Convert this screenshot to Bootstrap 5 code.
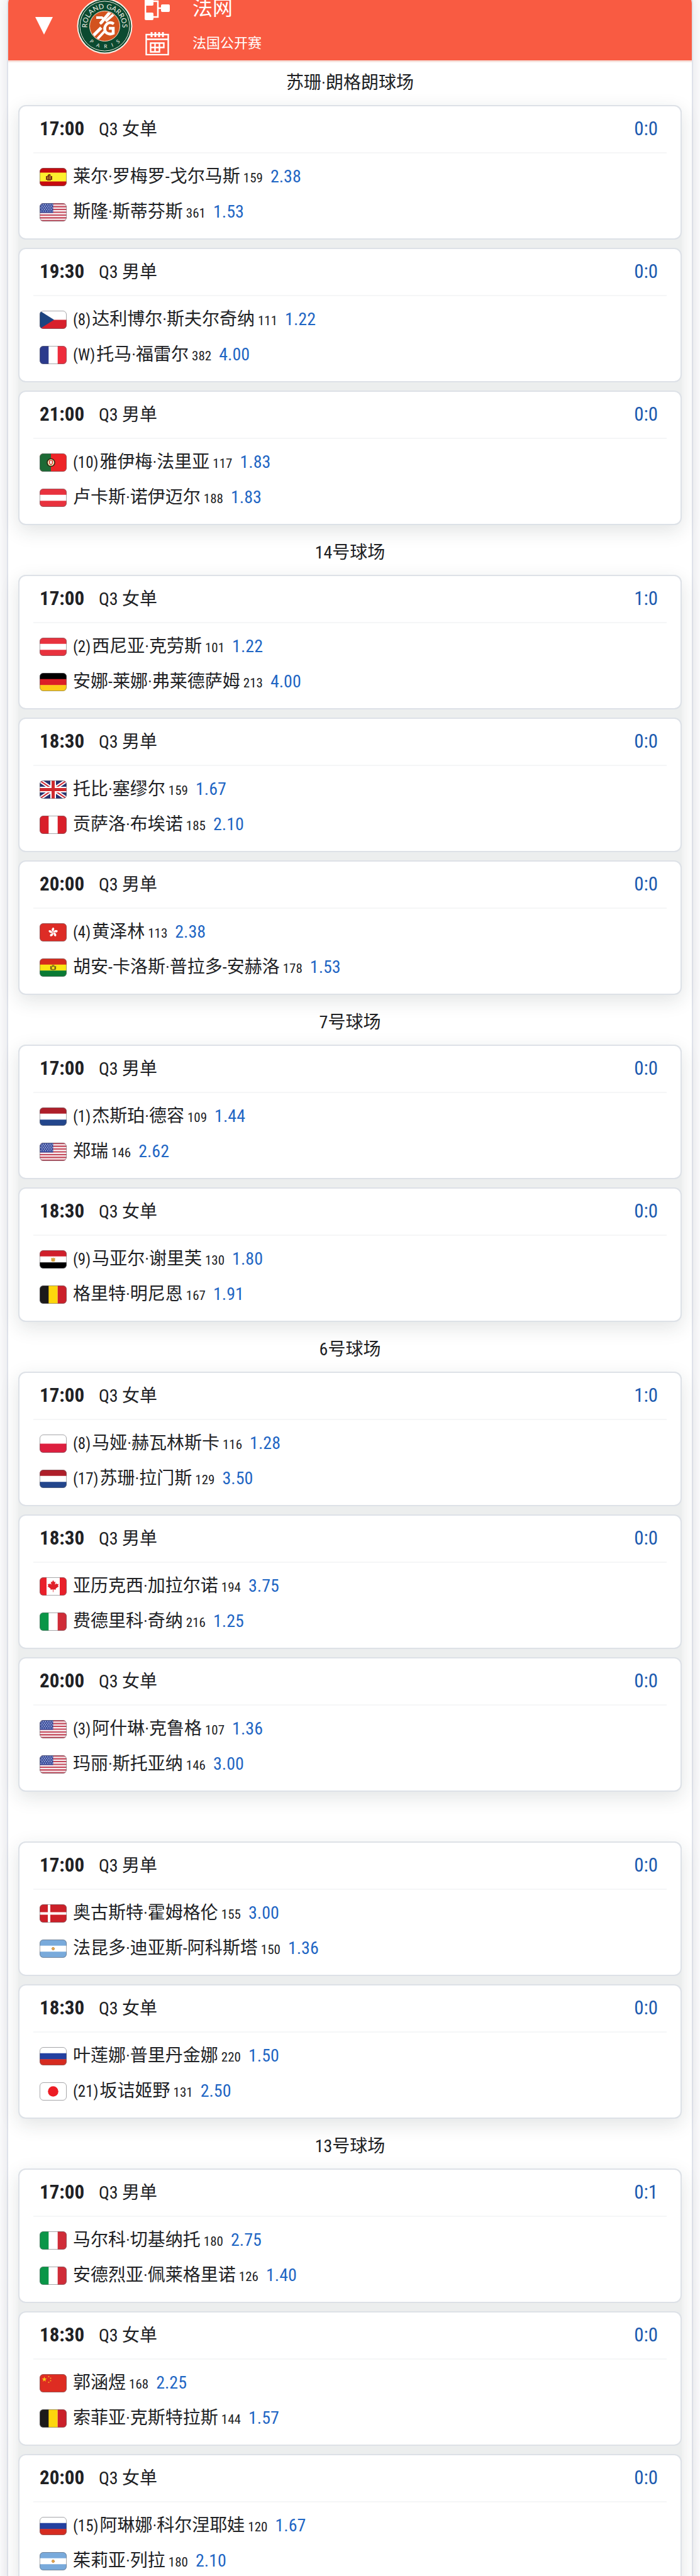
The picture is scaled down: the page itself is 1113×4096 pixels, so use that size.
<!DOCTYPE html>
<html lang="zh-CN">
<head>
<meta charset="utf-8">
<meta name="viewport" content="width=device-width, initial-scale=1">
<title>法网 赛程</title>
<link href="https://cdn.jsdelivr.net/npm/bootstrap@5.3.0/dist/css/bootstrap.min.css" rel="stylesheet">
<style>
  body { font-family: "Roboto Condensed", "Liberation Sans Narrow", Roboto, "Noto Sans CJK SC", sans-serif; font-size: 28px; color: #202124; background: #fdfdfe; }
  .page-view { height: 100vh; overflow: hidden; padding: 0 11px; }
  .event-panel { margin-top: -16px; background: #fff; border: 2px solid #dfe2ea; border-radius: 22px; box-shadow: 0 0 24px rgba(40, 50, 70, .12); }
  .event-head { height: 110px; background: #f95b42; border-radius: 20px 20px 0 0; color: #fff; padding-left: 42px; }
  .head-rule { height: 3px; background: #f6e3de; }
  .fold-btn { width: 30px; height: 30px; }
  .event-logo { width: 89px; height: 89px; margin-left: 37px; }
  .event-tools { width: 40px; margin-left: 19px; }
  .event-names { margin-left: 36px; }
  .head-cell { height: 55px; display: flex; align-items: center; }
  .event-title { font-size: 32px; font-weight: 400; }
  .event-sub { font-size: 22px; font-weight: 400; }
  .court-list { padding: 2px 16px 16px; }
  .court-name { height: 66px; line-height: 61px; font-size: 28px; font-weight: 400; text-align: center; }
  .match-stack { gap: 13px; background: #eceeee; border-radius: 12px; box-shadow: 0 9px 30px rgba(30, 50, 50, .13); }
  .match-stack + .court-name { margin-top: 13px; }
  .match-box { background: #fff; border: 2px solid #dde1e7; border-radius: 12px; padding-bottom: 14px; }
  .match-top { height: 75px; margin: 0 22px; padding: 0 14px 0 10px; border-bottom: 2px solid #f5f6f7; }
  .match-time { font-size: 31px; font-weight: 700; width: 94px; }
  .match-score { font-size: 31px; color: #1d5bb0; }
  .player-rows { padding: 9px 32px 0; }
  .player-row { height: 56px; }
  .flag { width: 43px; height: 29px; margin-right: 10px; flex: none; }
  .seed { font-size: 25px; margin-right: 2px; }
  .rank { font-size: 21px; margin-left: 5px; }
  .odds { color: #1f66c4; margin-left: 12px; }
</style>
<script src="https://cdn.jsdelivr.net/npm/bootstrap@5.3.0/dist/js/bootstrap.bundle.min.js"></script>
</head>
<body>
<svg width="0" height="0" class="position-absolute" aria-hidden="true">
  <defs>
    <clipPath id="round"><rect width="43" height="29" rx="6"/></clipPath>
    <symbol id="es" viewBox="0 0 43 29"><g clip-path="url(#round)"><path fill="#c60b0f" d="M0 0h43v29H0z"/><path fill="#fdf02e" d="M0 7.500h43v14H0z"/><path fill="#7a3a12" d="M10 13h2l2-3 3 0 1 3h2v6h-2v1h-6v-1h-2z"/><path stroke="#e8b93a" d="M13 14v4M16.500 12v6"/></g></symbol>
    <symbol id="us" viewBox="0 0 43 29"><g clip-path="url(#round)"><path fill="#f7eef0" d="M0 0h43v29H0z"/><path stroke="#c4485a" stroke-width="2.200" d="M0 1.100h43M0 5.600h43M0 10h43M0 14.500h43M0 19h43M0 23.400h43M0 27.900h43"/><path fill="#3c4f9e" d="M0 0h21.500v15.600H0z"/><path stroke="#cfd6f0" stroke-width="1.300" stroke-dasharray="1.300 2.300" d="M1.500 2.500h19M3.300 5h17M1.500 7.500h19M3.300 10h17M1.500 12.700h19"/></g></symbol>
    <symbol id="cz" viewBox="0 0 43 29"><g clip-path="url(#round)"><path fill="#fff" d="M0 0h43v15H0z"/><path fill="#d8202c" d="M0 14.500h43V29H0z"/><path fill="#1c4380" d="M0 0l23 14.500L0 29z"/></g></symbol>
    <symbol id="fr" viewBox="0 0 43 29"><g clip-path="url(#round)"><path fill="#fff" d="M0 0h43v29H0z"/><path fill="#2b3a8c" d="M0 0h14.300v29H0z"/><path fill="#ee2c3c" d="M28.700 0H43v29H28.700z"/></g></symbol>
    <symbol id="pt" viewBox="0 0 43 29"><g clip-path="url(#round)"><path fill="#ee2427" d="M0 0h43v29H0z"/><path fill="#1d6a35" d="M0 0h18v29H0z"/><circle cx="18" cy="14.500" r="6.800" fill="#33220c"/><circle cx="18" cy="14.500" r="5.200" fill="#f0e2b0"/><path fill="#d8342c" d="M15 11h6v5l-3 3-3-3z"/><path fill="#fff" d="M16.500 12h3v4l-1.500 1-1.500-1z"/></g></symbol>
    <symbol id="at" viewBox="0 0 43 29"><g clip-path="url(#round)"><path fill="#e8323e" d="M0 0h43v29H0z"/><path fill="#fff" d="M0 9.700h43v9.600H0z"/></g></symbol>
    <symbol id="de" viewBox="0 0 43 29"><g clip-path="url(#round)"><path d="M0 0h43v10H0z"/><path fill="#dc1f26" d="M0 9.700h43v10H0z"/><path fill="#fdca16" d="M0 19.300h43V29H0z"/></g></symbol>
    <symbol id="gb" viewBox="0 0 43 29"><g clip-path="url(#round)"><path fill="#28326e" d="M0 0h43v29H0z"/><path stroke="#fff" stroke-width="6" d="M0 0l43 29M43 0L0 29"/><path stroke="#cf2a36" stroke-width="2" d="M0 0l43 29M43 0L0 29"/><path stroke="#fff" stroke-width="9" d="M21.500 0v29M0 14.500h43"/><path stroke="#cf2a2e" stroke-width="5" d="M21.500 0v29M0 14.500h43"/></g></symbol>
    <symbol id="pe" viewBox="0 0 43 29"><g clip-path="url(#round)"><path fill="#d91f2a" d="M0 0h43v29H0z"/><path fill="#fff" d="M14.300 0h14.400v29H14.300z"/></g></symbol>
    <symbol id="hk" viewBox="0 0 43 29"><g clip-path="url(#round)"><path fill="#dd2c26" d="M0 0h43v29H0z"/><g fill="#fff"><path id="petal" d="M21.500 14.200c-3-2-3.200-5.500 0-7.400 2.600 1.400 1.800 3 1.200 4.200-.6 1.200-.8 2-1.200 3.200z"/><use href="#petal" transform="rotate(72 21.500 14.500)"/><use href="#petal" transform="rotate(144 21.500 14.500)"/><use href="#petal" transform="rotate(216 21.500 14.500)"/><use href="#petal" transform="rotate(288 21.500 14.500)"/></g></g></symbol>
    <symbol id="bo" viewBox="0 0 43 29"><g clip-path="url(#round)"><path fill="#d62b1c" d="M0 0h43v10H0z"/><path fill="#fae413" d="M0 9.700h43v10H0z"/><path fill="#0a7a34" d="M0 19.300h43V29H0z"/><g fill="none" stroke="#6b5a1c" stroke-width="1.200"><circle cx="21.500" cy="15" r="2.800"/><path d="M17.500 12v5l2 1M25.500 12v5l-2 1M19.500 11l4 0"/></g></g></symbol>
    <symbol id="nl" viewBox="0 0 43 29"><g clip-path="url(#round)"><path fill="#ae1f2a" d="M0 0h43v10H0z"/><path fill="#fff" d="M0 9.700h43v10H0z"/><path fill="#23468c" d="M0 19.300h43V29H0z"/></g></symbol>
    <symbol id="eg" viewBox="0 0 43 29"><g clip-path="url(#round)"><path fill="#d01f2b" d="M0 0h43v10H0z"/><path fill="#fff" d="M0 9.700h43v10H0z"/><path d="M0 19.300h43V29H0z"/><path fill="#d9a441" d="M18.500 11.500l2 1.500 1-2 1 2 2-1.500v5l-1 1.500h-4l-1-1.500z"/></g></symbol>
    <symbol id="be" viewBox="0 0 43 29"><g clip-path="url(#round)"><path fill="#1c1a1a" d="M0 0h15v29H0z"/><path fill="#fdd60d" d="M14.300 0h14.400v29H14.300z"/><path fill="#cb202a" d="M28.700 0H43v29H28.700z"/></g></symbol>
    <symbol id="pl" viewBox="0 0 43 29"><g clip-path="url(#round)"><path fill="#fff" d="M0 0h43v15H0z"/><path fill="#dd1f3f" d="M0 14.500h43V29H0z"/></g></symbol>
    <symbol id="ca" viewBox="0 0 43 29"><g clip-path="url(#round)"><path fill="#e9202a" d="M0 0h43v29H0z"/><path fill="#fff" d="M11 0h21v29H11z"/><path fill="#e02029" d="M21.500 4.500l1.800 3.300 1.900-1-.8 5 2.500-2.400.6 1.500 2.700-.5-1 3 1.200.8-5 4 .5 1.600-4-.6v4.300h-.8v-4.300l-4 .6.500-1.600-5-4 1.200-.8-1-3 2.700.5.600-1.500 2.500 2.400-.8-5 1.900 1z"/></g></symbol>
    <symbol id="it" viewBox="0 0 43 29"><g clip-path="url(#round)"><path fill="#fff" d="M0 0h43v29H0z"/><path fill="#0a9648" d="M0 0h14.300v29H0z"/><path fill="#d02c38" d="M28.700 0H43v29H28.700z"/></g></symbol>
    <symbol id="dk" viewBox="0 0 43 29"><g clip-path="url(#round)"><path fill="#cc2029" d="M0 0h43v29H0z"/><path stroke="#fff" stroke-width="4" d="M15 0v29M0 14.500h43"/></g></symbol>
    <symbol id="ar" viewBox="0 0 43 29"><g clip-path="url(#round)"><path fill="#79aadb" d="M0 0h43v29H0z"/><path fill="#fff" d="M0 9.700h43v9.600H0z"/><circle cx="21.500" cy="14.500" r="2.200" fill="#e3a548" stroke="#a5682a" stroke-dasharray="1 1"/></g></symbol>
    <symbol id="ru" viewBox="0 0 43 29"><g clip-path="url(#round)"><path fill="#fff" d="M0 0h43v10H0z"/><path fill="#2340a0" d="M0 9.700h43v10H0z"/><path fill="#d62b20" d="M0 19.300h43V29H0z"/></g></symbol>
    <symbol id="jp" viewBox="0 0 43 29"><rect width="43" height="29" rx="6" fill="#fff"/><circle cx="21.500" cy="14.500" r="8.300" fill="#ec1c24"/></symbol>
    <symbol id="cn" viewBox="0 0 43 29"><g clip-path="url(#round)"><path fill="#de2c22" d="M0 0h43v29H0z"/><path fill="#fbd116" d="M7.500 4l1 3h3l-2.500 2 1 3-2.500-1.900L5 12l1-3-2.500-2h3z"/><g fill="#f0b020"><circle cx="14.500" cy="4" r="1"/><circle cx="17.500" cy="6.500" r="1"/><circle cx="17.500" cy="10.500" r="1"/><circle cx="14.500" cy="13" r="1"/></g></g></symbol>
    <symbol id="edge" viewBox="0 0 43 29"><rect x=".5" y=".5" width="42" height="28" rx="5.500" fill="none" stroke="#6d6d72" stroke-opacity=".6"/></symbol>
  </defs>
</svg>
<div class="page-view">
<main class="event-panel">
  <header class="event-head d-flex align-items-center">
    <button type="button" class="fold-btn btn p-0 border-0 d-flex" aria-label="收起">
      <svg width="30" height="30" viewBox="0 0 30 30"><path fill="#fff" d="M1 1h28L15 29z"/></svg>
    </button>
    <svg class="event-logo" viewBox="0 0 89 89" role="img" aria-label="Roland Garros Paris">
      <defs>
        <path id="arcTop" d="M17.300 51.500A28 28 0 1 1 71.700 51.500"/>
        <path id="arcBottom" d="M13.100 60A35 35 0 0 0 75.900 60"/>
        <clipPath id="clay"><circle cx="44.500" cy="44.500" r="23"/></clipPath>
      </defs>
      <circle cx="44.500" cy="44.500" r="44" fill="#fdeee4"/>
      <circle cx="44.500" cy="44.500" r="42" fill="#0b4a30"/>
      <circle cx="44.500" cy="44.500" r="39.500" fill="none" stroke="#f4ece0"/>
      <circle cx="44.500" cy="44.500" r="24" fill="#d2521e" stroke="#f6e4d0"/>
      <g clip-path="url(#clay)" fill="none" stroke="#fff">
        <path stroke-width="5" d="M55 20L38 40M22 64l17-17"/>
        <path stroke-width="4" d="M63 22L46 37M30 68l14-15"/>
        <path stroke-width="4" d="M31 31h9q4 2 1 6l-4 4"/>
        <path stroke-width="4.500" d="M59 41q-6-4-11 0-6 6-2 13 5 5 12 2v-8h-7"/>
      </g>
      <g fill="#f4f0e6" font-family="Lato, sans-serif">
        <text font-size="11"><textPath href="#arcTop" startOffset="50%" text-anchor="middle">ROLAND GARROS</textPath></text>
        <text font-size="8"><textPath href="#arcBottom" startOffset="50%" text-anchor="middle">P&nbsp;&nbsp;&nbsp;&nbsp;A&nbsp;&nbsp;&nbsp;&nbsp;R&nbsp;&nbsp;&nbsp;&nbsp;I&nbsp;&nbsp;&nbsp;&nbsp;S</textPath></text>
      </g>
    </svg>
    <div class="event-tools">
      <div class="head-cell">
        <button type="button" class="btn p-0 border-0 d-flex" aria-label="签表">
          <svg width="40" height="40" viewBox="0 0 40 40" fill="#fff"><rect y="3" width="14" height="12" rx="2"/><rect y="26" width="14" height="12" rx="2"/><rect x="26" y="13" width="14" height="12" rx="2"/><path fill="none" stroke="#fff" stroke-width="2.500" d="M14 8h7v25h-7M21 19h6M1.200 8v20"/></svg>
        </button>
      </div>
      <div class="head-cell">
        <button type="button" class="btn p-0 border-0 d-flex" aria-label="赛程">
          <svg width="40" height="38" viewBox="0 0 40 38" fill="none" stroke="#fff" stroke-width="2.400"><rect x="2.500" y="5" width="35" height="32"/><path d="M2.500 12.500h35"/><path stroke-width="3" d="M11 1v8M17 1v8M23 1v8M29 1v8"/><path d="M9.500 18.500h21v7h-7v7h-14zM16.500 18.500v14M23.500 18.500v7M9.500 25.500h14"/></svg>
        </button>
      </div>
    </div>
    <div class="event-names">
      <h1 class="head-cell event-title m-0">法网</h1>
      <div class="head-cell event-sub">法国公开赛</div>
    </div>
  </header>
  <div class="head-rule"></div>

  <div class="court-list">
    <h2 class="court-name mb-0">苏珊·朗格朗球场</h2>
    <section class="match-stack d-flex flex-column">
      <article class="match-box">
        <div class="match-top d-flex align-items-center"><time class="match-time">17:00</time><span>Q3 女单</span><span class="match-score ms-auto">0:0</span></div>
        <div class="player-rows">
          <div class="player-row d-flex align-items-center"><svg class="flag"><use href="#es"/><use href="#edge"/></svg><div class="d-flex align-items-baseline"><span>莱尔·罗梅罗-戈尔马斯</span><span class="rank">159</span><span class="odds">2.38</span></div></div>
          <div class="player-row d-flex align-items-center"><svg class="flag"><use href="#us"/><use href="#edge"/></svg><div class="d-flex align-items-baseline"><span>斯隆·斯蒂芬斯</span><span class="rank">361</span><span class="odds">1.53</span></div></div>
        </div>
      </article>
      <article class="match-box">
        <div class="match-top d-flex align-items-center"><time class="match-time">19:30</time><span>Q3 男单</span><span class="match-score ms-auto">0:0</span></div>
        <div class="player-rows">
          <div class="player-row d-flex align-items-center"><svg class="flag"><use href="#cz"/><use href="#edge"/></svg><div class="d-flex align-items-baseline"><span class="seed">(8)</span><span>达利博尔·斯夫尔奇纳</span><span class="rank">111</span><span class="odds">1.22</span></div></div>
          <div class="player-row d-flex align-items-center"><svg class="flag"><use href="#fr"/><use href="#edge"/></svg><div class="d-flex align-items-baseline"><span class="seed">(W)</span><span>托马·福雷尔</span><span class="rank">382</span><span class="odds">4.00</span></div></div>
        </div>
      </article>
      <article class="match-box">
        <div class="match-top d-flex align-items-center"><time class="match-time">21:00</time><span>Q3 男单</span><span class="match-score ms-auto">0:0</span></div>
        <div class="player-rows">
          <div class="player-row d-flex align-items-center"><svg class="flag"><use href="#pt"/><use href="#edge"/></svg><div class="d-flex align-items-baseline"><span class="seed">(10)</span><span>雅伊梅·法里亚</span><span class="rank">117</span><span class="odds">1.83</span></div></div>
          <div class="player-row d-flex align-items-center"><svg class="flag"><use href="#at"/><use href="#edge"/></svg><div class="d-flex align-items-baseline"><span>卢卡斯·诺伊迈尔</span><span class="rank">188</span><span class="odds">1.83</span></div></div>
        </div>
      </article>
    </section>

    <h2 class="court-name mb-0">14号球场</h2>
    <section class="match-stack d-flex flex-column">
      <article class="match-box">
        <div class="match-top d-flex align-items-center"><time class="match-time">17:00</time><span>Q3 女单</span><span class="match-score ms-auto">1:0</span></div>
        <div class="player-rows">
          <div class="player-row d-flex align-items-center"><svg class="flag"><use href="#at"/><use href="#edge"/></svg><div class="d-flex align-items-baseline"><span class="seed">(2)</span><span>西尼亚·克劳斯</span><span class="rank">101</span><span class="odds">1.22</span></div></div>
          <div class="player-row d-flex align-items-center"><svg class="flag"><use href="#de"/><use href="#edge"/></svg><div class="d-flex align-items-baseline"><span>安娜-莱娜·弗莱德萨姆</span><span class="rank">213</span><span class="odds">4.00</span></div></div>
        </div>
      </article>
      <article class="match-box">
        <div class="match-top d-flex align-items-center"><time class="match-time">18:30</time><span>Q3 男单</span><span class="match-score ms-auto">0:0</span></div>
        <div class="player-rows">
          <div class="player-row d-flex align-items-center"><svg class="flag"><use href="#gb"/><use href="#edge"/></svg><div class="d-flex align-items-baseline"><span>托比·塞缪尔</span><span class="rank">159</span><span class="odds">1.67</span></div></div>
          <div class="player-row d-flex align-items-center"><svg class="flag"><use href="#pe"/><use href="#edge"/></svg><div class="d-flex align-items-baseline"><span>贡萨洛·布埃诺</span><span class="rank">185</span><span class="odds">2.10</span></div></div>
        </div>
      </article>
      <article class="match-box">
        <div class="match-top d-flex align-items-center"><time class="match-time">20:00</time><span>Q3 男单</span><span class="match-score ms-auto">0:0</span></div>
        <div class="player-rows">
          <div class="player-row d-flex align-items-center"><svg class="flag"><use href="#hk"/><use href="#edge"/></svg><div class="d-flex align-items-baseline"><span class="seed">(4)</span><span>黄泽林</span><span class="rank">113</span><span class="odds">2.38</span></div></div>
          <div class="player-row d-flex align-items-center"><svg class="flag"><use href="#bo"/><use href="#edge"/></svg><div class="d-flex align-items-baseline"><span>胡安-卡洛斯·普拉多-安赫洛</span><span class="rank">178</span><span class="odds">1.53</span></div></div>
        </div>
      </article>
    </section>

    <h2 class="court-name mb-0">7号球场</h2>
    <section class="match-stack d-flex flex-column">
      <article class="match-box">
        <div class="match-top d-flex align-items-center"><time class="match-time">17:00</time><span>Q3 男单</span><span class="match-score ms-auto">0:0</span></div>
        <div class="player-rows">
          <div class="player-row d-flex align-items-center"><svg class="flag"><use href="#nl"/><use href="#edge"/></svg><div class="d-flex align-items-baseline"><span class="seed">(1)</span><span>杰斯珀·德容</span><span class="rank">109</span><span class="odds">1.44</span></div></div>
          <div class="player-row d-flex align-items-center"><svg class="flag"><use href="#us"/><use href="#edge"/></svg><div class="d-flex align-items-baseline"><span>郑瑞</span><span class="rank">146</span><span class="odds">2.62</span></div></div>
        </div>
      </article>
      <article class="match-box">
        <div class="match-top d-flex align-items-center"><time class="match-time">18:30</time><span>Q3 女单</span><span class="match-score ms-auto">0:0</span></div>
        <div class="player-rows">
          <div class="player-row d-flex align-items-center"><svg class="flag"><use href="#eg"/><use href="#edge"/></svg><div class="d-flex align-items-baseline"><span class="seed">(9)</span><span>马亚尔·谢里芙</span><span class="rank">130</span><span class="odds">1.80</span></div></div>
          <div class="player-row d-flex align-items-center"><svg class="flag"><use href="#be"/><use href="#edge"/></svg><div class="d-flex align-items-baseline"><span>格里特·明尼恩</span><span class="rank">167</span><span class="odds">1.91</span></div></div>
        </div>
      </article>
    </section>

    <h2 class="court-name mb-0">6号球场</h2>
    <section class="match-stack d-flex flex-column">
      <article class="match-box">
        <div class="match-top d-flex align-items-center"><time class="match-time">17:00</time><span>Q3 女单</span><span class="match-score ms-auto">1:0</span></div>
        <div class="player-rows">
          <div class="player-row d-flex align-items-center"><svg class="flag"><use href="#pl"/><use href="#edge"/></svg><div class="d-flex align-items-baseline"><span class="seed">(8)</span><span>马娅·赫瓦林斯卡</span><span class="rank">116</span><span class="odds">1.28</span></div></div>
          <div class="player-row d-flex align-items-center"><svg class="flag"><use href="#nl"/><use href="#edge"/></svg><div class="d-flex align-items-baseline"><span class="seed">(17)</span><span>苏珊·拉门斯</span><span class="rank">129</span><span class="odds">3.50</span></div></div>
        </div>
      </article>
      <article class="match-box">
        <div class="match-top d-flex align-items-center"><time class="match-time">18:30</time><span>Q3 男单</span><span class="match-score ms-auto">0:0</span></div>
        <div class="player-rows">
          <div class="player-row d-flex align-items-center"><svg class="flag"><use href="#ca"/><use href="#edge"/></svg><div class="d-flex align-items-baseline"><span>亚历克西·加拉尔诺</span><span class="rank">194</span><span class="odds">3.75</span></div></div>
          <div class="player-row d-flex align-items-center"><svg class="flag"><use href="#it"/><use href="#edge"/></svg><div class="d-flex align-items-baseline"><span>费德里科·奇纳</span><span class="rank">216</span><span class="odds">1.25</span></div></div>
        </div>
      </article>
      <article class="match-box">
        <div class="match-top d-flex align-items-center"><time class="match-time">20:00</time><span>Q3 女单</span><span class="match-score ms-auto">0:0</span></div>
        <div class="player-rows">
          <div class="player-row d-flex align-items-center"><svg class="flag"><use href="#us"/><use href="#edge"/></svg><div class="d-flex align-items-baseline"><span class="seed">(3)</span><span>阿什琳·克鲁格</span><span class="rank">107</span><span class="odds">1.36</span></div></div>
          <div class="player-row d-flex align-items-center"><svg class="flag"><use href="#us"/><use href="#edge"/></svg><div class="d-flex align-items-baseline"><span>玛丽·斯托亚纳</span><span class="rank">146</span><span class="odds">3.00</span></div></div>
        </div>
      </article>
    </section>

    <div class="court-name"></div>
    <section class="match-stack d-flex flex-column">
      <article class="match-box">
        <div class="match-top d-flex align-items-center"><time class="match-time">17:00</time><span>Q3 男单</span><span class="match-score ms-auto">0:0</span></div>
        <div class="player-rows">
          <div class="player-row d-flex align-items-center"><svg class="flag"><use href="#dk"/><use href="#edge"/></svg><div class="d-flex align-items-baseline"><span>奥古斯特·霍姆格伦</span><span class="rank">155</span><span class="odds">3.00</span></div></div>
          <div class="player-row d-flex align-items-center"><svg class="flag"><use href="#ar"/><use href="#edge"/></svg><div class="d-flex align-items-baseline"><span>法昆多·迪亚斯-阿科斯塔</span><span class="rank">150</span><span class="odds">1.36</span></div></div>
        </div>
      </article>
      <article class="match-box">
        <div class="match-top d-flex align-items-center"><time class="match-time">18:30</time><span>Q3 女单</span><span class="match-score ms-auto">0:0</span></div>
        <div class="player-rows">
          <div class="player-row d-flex align-items-center"><svg class="flag"><use href="#ru"/><use href="#edge"/></svg><div class="d-flex align-items-baseline"><span>叶莲娜·普里丹金娜</span><span class="rank">220</span><span class="odds">1.50</span></div></div>
          <div class="player-row d-flex align-items-center"><svg class="flag"><use href="#jp"/><use href="#edge"/></svg><div class="d-flex align-items-baseline"><span class="seed">(21)</span><span>坂诘姬野</span><span class="rank">131</span><span class="odds">2.50</span></div></div>
        </div>
      </article>
    </section>

    <h2 class="court-name mb-0">13号球场</h2>
    <section class="match-stack d-flex flex-column">
      <article class="match-box">
        <div class="match-top d-flex align-items-center"><time class="match-time">17:00</time><span>Q3 男单</span><span class="match-score ms-auto">0:1</span></div>
        <div class="player-rows">
          <div class="player-row d-flex align-items-center"><svg class="flag"><use href="#it"/><use href="#edge"/></svg><div class="d-flex align-items-baseline"><span>马尔科·切基纳托</span><span class="rank">180</span><span class="odds">2.75</span></div></div>
          <div class="player-row d-flex align-items-center"><svg class="flag"><use href="#it"/><use href="#edge"/></svg><div class="d-flex align-items-baseline"><span>安德烈亚·佩莱格里诺</span><span class="rank">126</span><span class="odds">1.40</span></div></div>
        </div>
      </article>
      <article class="match-box">
        <div class="match-top d-flex align-items-center"><time class="match-time">18:30</time><span>Q3 女单</span><span class="match-score ms-auto">0:0</span></div>
        <div class="player-rows">
          <div class="player-row d-flex align-items-center"><svg class="flag"><use href="#cn"/><use href="#edge"/></svg><div class="d-flex align-items-baseline"><span>郭涵煜</span><span class="rank">168</span><span class="odds">2.25</span></div></div>
          <div class="player-row d-flex align-items-center"><svg class="flag"><use href="#be"/><use href="#edge"/></svg><div class="d-flex align-items-baseline"><span>索菲亚·克斯特拉斯</span><span class="rank">144</span><span class="odds">1.57</span></div></div>
        </div>
      </article>
      <article class="match-box">
        <div class="match-top d-flex align-items-center"><time class="match-time">20:00</time><span>Q3 女单</span><span class="match-score ms-auto">0:0</span></div>
        <div class="player-rows">
          <div class="player-row d-flex align-items-center"><svg class="flag"><use href="#ru"/><use href="#edge"/></svg><div class="d-flex align-items-baseline"><span class="seed">(15)</span><span>阿琳娜·科尔涅耶娃</span><span class="rank">120</span><span class="odds">1.67</span></div></div>
          <div class="player-row d-flex align-items-center"><svg class="flag"><use href="#ar"/><use href="#edge"/></svg><div class="d-flex align-items-baseline"><span>茱莉亚·列拉</span><span class="rank">180</span><span class="odds">2.10</span></div></div>
        </div>
      </article>
    </section>
  </div>
</main>
</div>
</body>
</html>
